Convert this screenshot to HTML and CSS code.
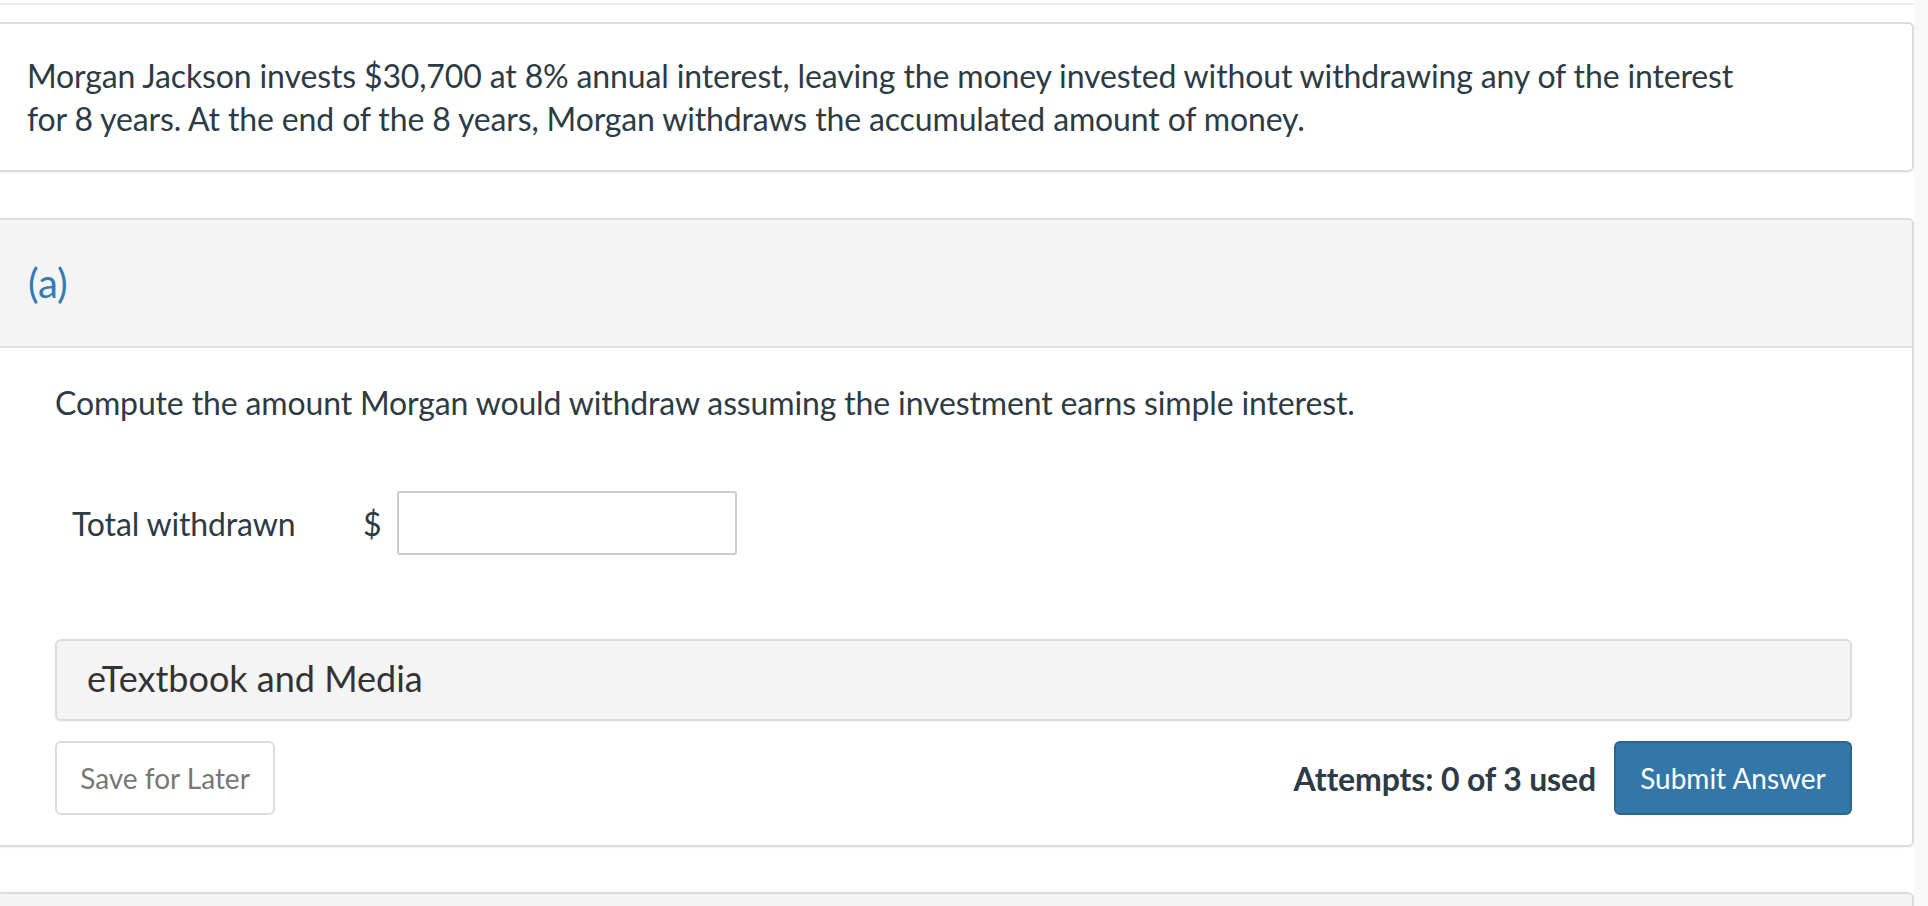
FILE: index.html
```html
<!DOCTYPE html>
<html lang="en">
<head>
<meta charset="utf-8">
<title>Question</title>
<link rel="stylesheet" href="styles.css">
</head>
<body>
<div class="page">
  <main class="main">
    <div class="topline"></div>
    <section class="card intro">
      <p class="stem">Morgan Jackson invests $30,700 at 8% annual interest, leaving the money invested without withdrawing any of the interest for 8 years. At the end of the 8 years, Morgan withdraws the accumulated amount of money.</p>
    </section>
    <section class="card part">
      <header class="part-head">(a)</header>
      <div class="part-body">
        <p class="prompt">Compute the amount Morgan would withdraw assuming the investment earns simple interest.</p>
        <div class="answer-row">
          <span class="answer-label">Total withdrawn</span>
          <span class="answer-unit">$</span>
          <input class="answer-input" type="text" aria-label="Total withdrawn">
        </div>
        <div class="media-box">eTextbook and Media</div>
        <div class="actions">
          <button class="btn btn-save" type="button">Save for Later</button>
          <div class="actions-right">
            <span class="attempts">Attempts: 0 of 3 used</span>
            <button class="btn btn-submit" type="button">Submit Answer</button>
          </div>
        </div>
      </div>
    </section>
    <section class="card next">
      <div class="next-head"></div>
    </section>
  </main>
  <aside class="scroll-track"></aside>
</div>
</body>
</html>
```
FILE: styles.css
```css
html, body {
  margin: 0;
  padding: 0;
  background: #ffffff;
  height: 100%;
  overflow: hidden;
}
body {
  font-family: Lato, "Open Sans", "Liberation Sans", sans-serif;
  color: #2d3b45;
  font-size: 32px;
  line-height: 43px;
  letter-spacing: -0.14px;
}
.page {
  display: grid;
  grid-template-columns: 1914px 14px;
  min-height: 906px;
}
.scroll-track {
  background: #f8f8f8;
}
.main {
  display: flex;
  flex-direction: column;
  overflow: hidden;
}
.topline {
  margin-top: 3px;
  height: 2px;
  background: #ececec;
}
.card {
  margin-left: -4px;
  border: 2px solid #dcdcdc;
  border-radius: 6px;
  background: #fff;
  box-shadow: 0 1px 2px rgba(0, 0, 0, 0.06);
}
.intro {
  margin-top: 17px;
  padding: 30px 30px 30px 29px;
}
.stem {
  margin: 0;
  max-width: 1740px;
}
.part {
  margin-top: 46px;
  overflow: hidden;
}
.part-head {
  background: #f4f4f4;
  border-bottom: 2px solid #e0e0e0;
  padding: 39px 30px 39px 30px;
  color: #337ab7;
  font-size: 40px;
  line-height: 48px;
  font-weight: 400;
  letter-spacing: 0;
}
.part-body {
  padding: 33px 60px 30px 57px;
}
.prompt {
  margin: 0;
}
.answer-row {
  display: flex;
  align-items: center;
  margin-top: 67px;
  padding-left: 17px;
}
.answer-label {
  width: 291px;
}
.answer-unit {
  width: 34px;
}
.answer-input {
  box-sizing: border-box;
  width: 340px;
  height: 64px;
  margin: 0;
  border: 2px solid #cccccc;
  border-radius: 3px;
  background: #fff;
  font: inherit;
}
.media-box {
  margin-top: 84px;
  background: #f4f4f4;
  border: 2px solid #dcdcdc;
  border-radius: 6px;
  box-shadow: 0 1px 2px rgba(0, 0, 0, 0.06);
  padding: 16px 30px 19px 30px;
  color: #333333;
  font-size: 36px;
  line-height: 43px;
  letter-spacing: 0;
}
.actions {
  display: flex;
  justify-content: space-between;
  align-items: center;
  margin-top: 20px;
}
.actions-right {
  display: flex;
  align-items: center;
  gap: 18px;
}
.btn {
  box-sizing: border-box;
  height: 74px;
  margin: 0;
  border-radius: 6px;
  font-family: Lato, "Open Sans", "Liberation Sans", sans-serif;
  font-size: 28px;
  line-height: 34px;
  white-space: nowrap;
  cursor: pointer;
  padding: 0;
}
.btn-save {
  width: 220px;
  background: #fff;
  border: 2px solid #dcdcdc;
  color: #777777;
}
.btn-submit {
  width: 238px;
  background: #3377a8;
  border: 2px solid #2b6590;
  color: #ffffff;
}
.attempts {
  font-weight: 700;
  color: #2d3b45;
}
.next {
  margin-top: 45px;
  overflow: hidden;
}
.next-head {
  height: 60px;
  background: #f4f4f4;
}
```
